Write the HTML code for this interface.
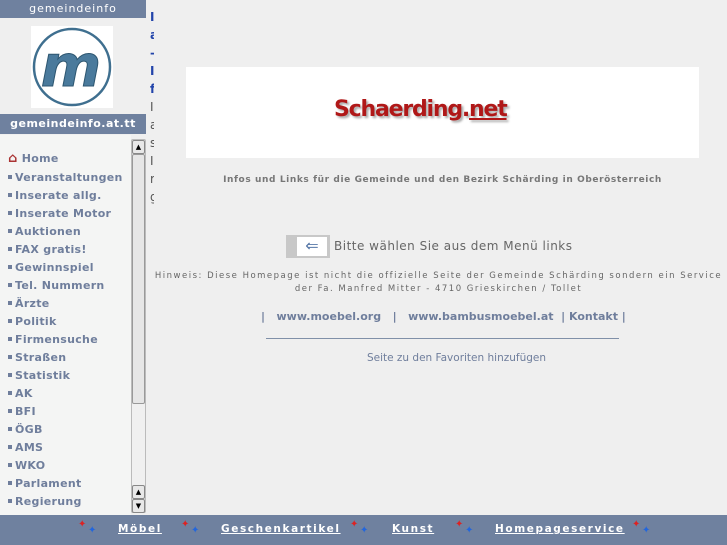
<!DOCTYPE html>
<html><head><meta charset="utf-8"><style>
*{margin:0;padding:0;box-sizing:border-box}
body{width:727px;height:545px;overflow:hidden;background:#efefef;font-family:"DejaVu Sans","Liberation Sans",sans-serif;position:relative}
.hd{position:absolute;left:0;width:146px;background:#6f819f;color:#fff;text-align:center;font-size:11px;letter-spacing:1px}
#side{position:absolute;left:0;top:135px;width:131px;height:380px;background:#f4f5f4}
#side div{position:absolute;left:8px;font-size:11px;font-weight:bold;color:#6f7e9c;letter-spacing:.3px}
#side span.b{display:inline-block;width:4px;height:4px;background:#6f7e9c;margin-right:3px;vertical-align:2px}
#sb{position:absolute;left:131px;top:139px;width:15px;height:374px;background:#f0f0f0;border:1px solid #bbb;border-radius:2px}
.btn{position:absolute;left:0;width:13px;height:14px;background:#e8e8e8;border:1px solid #888;border-radius:2px;font-size:7px;text-align:center;line-height:12px}
#foot{position:absolute;left:0;top:515px;width:727px;height:30px;background:#6f819f}
#foot a{position:absolute;top:8px;color:#fff;font-size:10.5px;font-weight:bold;letter-spacing:1.6px;text-decoration:underline}
.st{position:absolute;top:4px;font-size:10px}
</style></head><body>
<div class="hd" style="top:0;height:18px;line-height:18px">gemeindeinfo</div>
<div style="position:absolute;left:31px;top:26px;width:82px;height:82px;background:#fff">
<svg width="82" height="82"><circle cx="41" cy="41" r="38" fill="none" stroke="#3f6f8f" stroke-width="2.5"/><text x="40" y="60" text-anchor="middle" font-family="DejaVu Sans" font-style="italic" font-weight="bold" font-size="58" fill="#4a7a9c" stroke="#2d5670" stroke-width="1">m</text></svg></div>
<div class="hd" style="top:114px;height:20px;line-height:20px;font-weight:bold;font-size:11px;letter-spacing:.5px">gemeindeinfo.at.tt</div>
<div id="side">
<div style="top:16px;font-size:11px"><span style="color:#a33;font-size:13px">⌂</span> Home</div>
<div style="top:36px"><span class="b"></span>Veranstaltungen</div>
<div style="top:54px"><span class="b"></span>Inserate allg.</div>
<div style="top:72px"><span class="b"></span>Inserate Motor</div>
<div style="top:90px"><span class="b"></span>Auktionen</div>
<div style="top:108px"><span class="b"></span>FAX gratis!</div>
<div style="top:126px"><span class="b"></span>Gewinnspiel</div>
<div style="top:144px"><span class="b"></span>Tel. Nummern</div>
<div style="top:162px"><span class="b"></span>Ärzte</div>
<div style="top:180px"><span class="b"></span>Politik</div>
<div style="top:198px"><span class="b"></span>Firmensuche</div>
<div style="top:216px"><span class="b"></span>Straßen</div>
<div style="top:234px"><span class="b"></span>Statistik</div>
<div style="top:252px"><span class="b"></span>AK</div>
<div style="top:270px"><span class="b"></span>BFI</div>
<div style="top:288px"><span class="b"></span>ÖGB</div>
<div style="top:306px"><span class="b"></span>AMS</div>
<div style="top:324px"><span class="b"></span>WKO</div>
<div style="top:342px"><span class="b"></span>Parlament</div>
<div style="top:360px"><span class="b"></span>Regierung</div>
</div>
<div id="sb">
<div class="btn" style="top:0">▲</div>
<div style="position:absolute;left:0;top:14px;width:13px;height:250px;background:#e6e6e6;border:1px solid #999;border-radius:2px"></div>
<div class="btn" style="top:345px">▲</div>
<div class="btn" style="top:359px">▼</div>
</div>
<div style="position:absolute;left:150px;top:8px;width:4px;height:200px;overflow:hidden;font-size:12px;line-height:18px;color:#2244aa;font-weight:bold">I<br>a<br>-<br>I<br>f<br><span style="color:#555;font-weight:normal">I<br>a<br>s<br>I<br>r<br>g<br>v</span></div>
<div style="position:absolute;left:186px;top:67px;width:513px;height:91px;background:#fff"></div>
<div style="position:absolute;left:334px;top:97px;font-family:'DejaVu Sans',sans-serif;font-weight:bold;font-size:22px;color:#b01818;text-shadow:2px 2px 2px #aaa;letter-spacing:-1.2px">Schaerding.<u>net</u></div>
<div style="position:absolute;left:186px;top:175px;width:513px;text-align:center;font-size:9px;font-weight:bold;color:#777;letter-spacing:.6px">Infos und Links für die Gemeinde und den Bezirk Schärding in Oberösterreich</div>
<div style="position:absolute;left:286px;top:235px;width:44px;height:23px;background:#c8c8c8"><div style="position:absolute;left:11px;top:2px;width:30px;height:19px;background:#fff;color:#5878a8;font-size:16px;line-height:18px;text-align:center">⇐</div></div>
<div style="position:absolute;left:334px;top:239px;font-size:12px;color:#666;letter-spacing:.5px">Bitte wählen Sie aus dem Menü links</div>
<div style="position:absolute;left:150px;top:270px;width:577px;text-align:center;font-size:8.5px;color:#666;letter-spacing:1.5px;line-height:13px">Hinweis: Diese Homepage ist nicht die offizielle Seite der Gemeinde Schärding sondern ein Service<br>der Fa. Manfred Mitter - 4710 Grieskirchen / Tollet</div>
<div style="position:absolute;left:261px;top:310px;font-size:11px;font-weight:bold;color:#6f7e9c;white-space:pre">|   www.moebel.org   |   www.bambusmoebel.at  | Kontakt |</div>
<div style="position:absolute;left:266px;top:338px;width:353px;height:1px;background:#8090a8"></div>
<div style="position:absolute;left:186px;top:352px;width:541px;text-align:center;font-size:10.5px;color:#6f7e9c">Seite zu den Favoriten hinzufügen</div>
<div id="foot">
<span class="st" style="left:78px;color:#d22">✦</span><span class="st" style="left:88px;top:10px;color:#26d">✦</span>
<a style="left:118px">Möbel</a>
<span class="st" style="left:181px;color:#d22">✦</span><span class="st" style="left:191px;top:10px;color:#26d">✦</span>
<a style="left:221px">Geschenkartikel</a>
<span class="st" style="left:350px;color:#d22">✦</span><span class="st" style="left:360px;top:10px;color:#26d">✦</span>
<a style="left:392px">Kunst</a>
<span class="st" style="left:455px;color:#d22">✦</span><span class="st" style="left:465px;top:10px;color:#26d">✦</span>
<a style="left:495px">Homepageservice</a>
<span class="st" style="left:632px;color:#d22">✦</span><span class="st" style="left:642px;top:10px;color:#26d">✦</span>
</div>
</body></html>
